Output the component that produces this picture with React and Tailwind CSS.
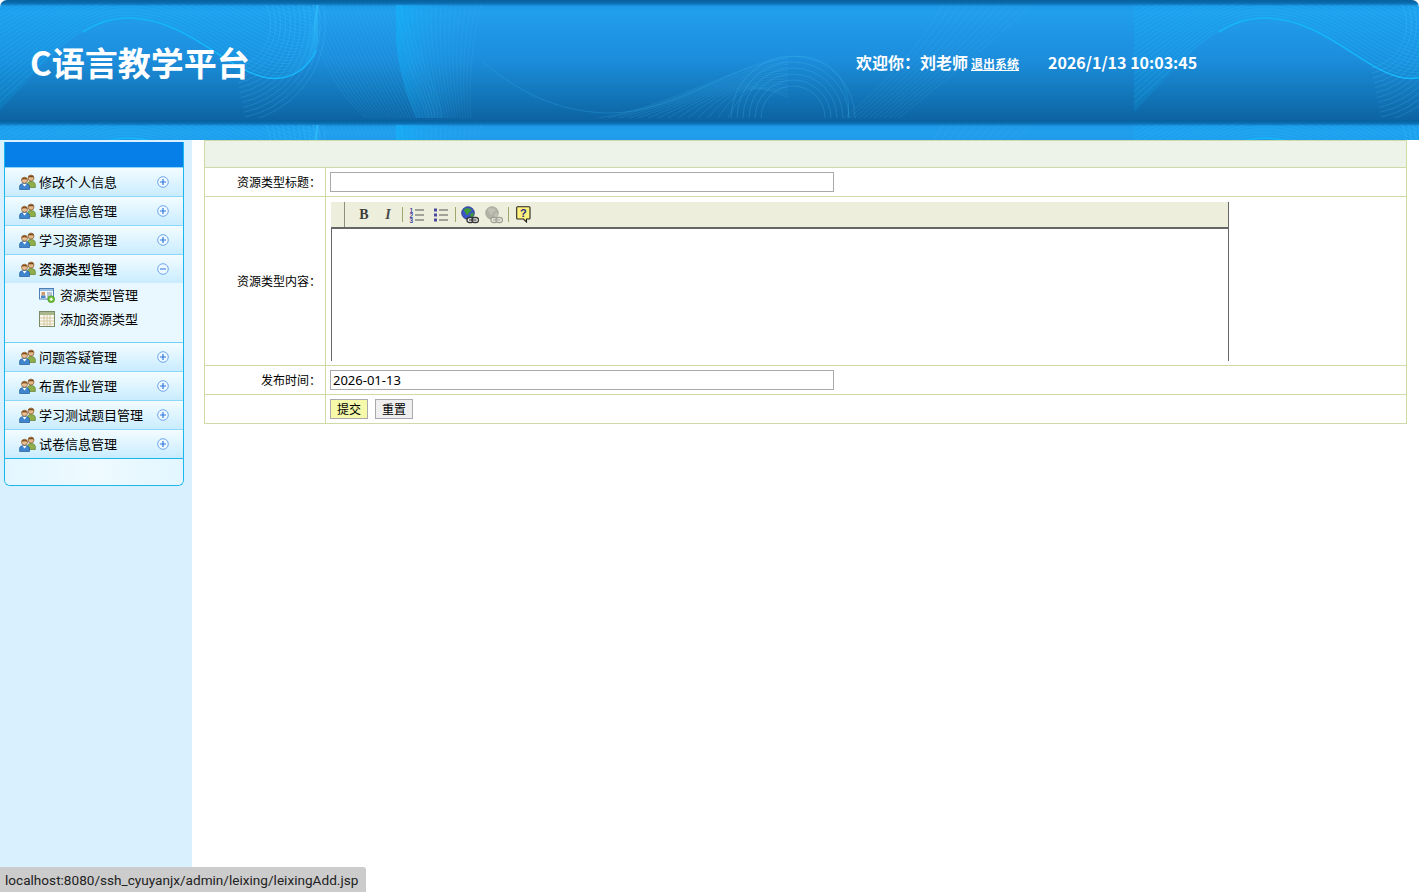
const range = (n) => Array.from({ length: n }, (_, i) => i);

function HeaderArt() {
  return (
    <svg className="absolute inset-0 w-full h-full" width="1419" height="140">
      <defs>
        <linearGradient id="hbg" x1="0" y1="0" x2="0" y2="1">
          <stop offset="0" stopColor="#07609c" />
          <stop offset="0.025" stopColor="#0a6cae" />
          <stop offset="0.055" stopColor="#1e9ae8" />
          <stop offset="0.1" stopColor="#219eee" />
          <stop offset="0.5" stopColor="#1c8ddb" />
          <stop offset="0.83" stopColor="#1173b5" />
          <stop offset="1" stopColor="#0d63a3" />
        </linearGradient>
        <linearGradient id="dshape" x1="0" y1="0" x2="1" y2="0.3">
          <stop offset="0" stopColor="#0fb4fb" stopOpacity="0.6" />
          <stop offset="0.5" stopColor="#18a8f2" stopOpacity="0.22" />
          <stop offset="1" stopColor="#18a8f2" stopOpacity="0" />
        </linearGradient>
        <clipPath id="artclip">
          <rect x="0" y="5" width="1136" height="113" />
        </clipPath>
        <pattern id="tile" x="-2" y="0" width="1136" height="120" patternUnits="userSpaceOnUse">
          <rect width="1136" height="120" fill="url(#hbg)" />
          <g fill="none" strokeWidth="1" clipPath="url(#artclip)">
            <path d="M0,5 L0,112 C50,60 80,18 130,18 C190,18 230,72 270,78 C300,82 316,60 320,40 L320,5 Z" fill="#0fb0f8" fillOpacity="0.16" stroke="none" />
            {range(26).map((i) => (
              <path key={i} stroke="#2bbcfb" strokeOpacity="0.26" d={`M${-10 - i * 4},${112 - i * 3} C${50 - i * 2},${60 - i * 3} ${80},${18 - i * 3} ${130},${18 - i * 3} C${190 + i},${18 - i * 3} ${230 + i * 2},${72 - i * 3} ${270 + i * 2},${78 - i * 3} C${300 + i},${82 - i * 3} ${316},${60 - i * 2} ${320},${40 - i * 2}`} />
            ))}
            <path stroke="#14b6fb" strokeWidth="1.6" d="M85,32 C100,22 115,18 130,18 C190,18 230,72 270,78 C295,81 312,66 318,50" />
            {range(12).map((i) => (
              <path key={i} stroke="#4ecaff" strokeOpacity="0.2" d={`M${228 + (45 + i * 5) * 0.3},${24 - (45 + i * 5) * 0.95} A${45 + i * 5},${45 + i * 5} 0 0 1 ${228 + (45 + i * 5) * 0.2},${24 + (45 + i * 5) * 0.98}`} />
            ))}
            {range(26).map((i) => (
              <path key={i} stroke="#35bcf8" strokeOpacity="0.16" d={`M${302 + i * 4},4 C${322 + i * 4},60 ${345 + i * 4},100 ${368 + i * 3},118`} />
            ))}
            <path d="M398,5 L398,40 C400,70 410,100 418,118 L455,118 C475,105 485,85 483,65 C480,40 470,20 450,5 Z" fill="url(#dshape)" stroke="none" />
            {range(18).map((i) => (
              <path key={i} stroke="#56ccff" strokeOpacity="0.1" d={`M${398 + i * 5},5 C${404 + i * 4},50 ${420 + i * 3},90 ${430 + i * 2.5},118`} />
            ))}
            <path stroke="#2bb0f0" strokeOpacity="0.28" d="M485,62 C530,100 570,112 610,113 C680,113 730,65 790,57 C830,52 855,80 850,118" />
            {range(14).map((i) => (
              <path key={i} stroke="#4cc0f5" strokeOpacity="0.16" d={`M${600 + i * 10},118 C${670 + i * 6},${108 - i * 2} ${720 + i * 3},${72 + i} ${790},${58 + i * 3}`} />
            ))}
            {range(6).map((i) => (
              <path key={i} stroke="#4cc0f5" strokeOpacity="0.22" d={`M${795 - (32 + i * 6)},118 A${32 + i * 6},${32 + i * 6} 0 0 1 ${795 + (32 + i * 6)},118`} />
            ))}
            {range(12).map((i) => (
              <path key={i} stroke="#56c4f8" strokeOpacity="0.13" d={`M${846 + i * 5},118 C${880 + i * 5},${90} ${920 + i * 6},${50} ${945 + i * 8},5`} />
            ))}
          </g>
        </pattern>
      </defs>
      <rect width="1419" height="140" fill="url(#tile)" />
    </svg>
  );
}

function UsersIcon() {
  return (
    <svg width="17" height="16" viewBox="0 0 17 16" className="shrink-0">
      <path d="M8.5 13.5 V9.5 C9 8 10.5 7.5 12 7.5 C14.5 7.5 16.3 8.5 16.3 11 V13.5 Z" fill="#8fae4a" stroke="#5e7d2a" strokeWidth="0.7" />
      <circle cx="12" cy="4" r="3" fill="#e3b98c" stroke="#8a5a2a" strokeWidth="0.7" />
      <path d="M9 3.5 C9.5 1 14.5 0.5 15 3.5 C13 3 11 3 9 3.5 Z" fill="#7a4a1c" />
      <path d="M0.6 15.5 V12.5 C0.6 10.3 3 9.6 5.5 9.6 C8 9.6 10.5 10.3 10.5 12.5 V15.5 Z" fill="#3f86cf" stroke="#1e5b9e" strokeWidth="0.7" />
      <path d="M3.6 10 L5.5 12.4 L7.6 10 Z" fill="#ffffff" />
      <circle cx="5.5" cy="6.2" r="3" fill="#e8bf94" stroke="#8a5a2a" strokeWidth="0.7" />
      <path d="M2.5 5.8 C3 3 8 2.8 8.5 5.8 C6.5 5 4.5 5 2.5 5.8 Z" fill="#86501f" />
    </svg>
  );
}

function ToggleIcon({ open }) {
  return (
    <svg width="12" height="12" viewBox="0 0 12 12" className="shrink-0">
      <circle cx="6" cy="6" r="5.3" fill="#eef8ff" stroke="#6fa6ee" />
      <path d={open ? "M3 6 H9" : "M3 6 H9 M6 3 V9"} stroke="#2f78dc" strokeWidth="1.2" />
    </svg>
  );
}

function CardIcon() {
  return (
    <svg width="16" height="16" viewBox="0 0 16 16" className="shrink-0">
      <rect x="0.5" y="1.5" width="14" height="10.5" fill="#f4f8fc" stroke="#4c7fb4" />
      <rect x="1" y="2" width="13" height="2" fill="#9cc0e4" />
      <rect x="2.5" y="5" width="3.5" height="3.5" fill="#d29a66" />
      <rect x="2" y="8.5" width="4.5" height="2.5" fill="#4c86c4" />
      <path d="M8 6 H13 M8 8 H13 M8 10 H10" stroke="#7c93aa" />
      <circle cx="12.2" cy="12.2" r="3.4" fill="#6cc035" stroke="#3f8a18" strokeWidth="0.6" />
      <path d="M10.4 12.2 H14 M12.2 10.4 V14" stroke="#ffffff" strokeWidth="1.1" />
    </svg>
  );
}

function GridIcon() {
  return (
    <svg width="16" height="16" viewBox="0 0 16 16" className="shrink-0">
      <rect x="0.5" y="0.5" width="15" height="15" fill="#fbfaf2" stroke="#7d8a66" />
      <rect x="1" y="1" width="14" height="3" fill="#a9b88c" />
      <path d="M1 7 H15 M1 10 H15 M1 13 H15 M5 4 V15 M8 4 V15 M11 4 V15" stroke="#d4c7a0" />
    </svg>
  );
}

function OlIcon() {
  return (
    <svg width="16" height="16" viewBox="0 0 16 16">
      <g fill="#48489c" fontSize="6.5" fontWeight="700" fontFamily="'Liberation Sans',sans-serif">
        <text x="0.5" y="5.5">1</text>
        <text x="0.5" y="10.5">2</text>
        <text x="0.5" y="15.5">3</text>
      </g>
      <path d="M6 3 H15 M6 8 H15 M6 13 H15" stroke="#555" />
    </svg>
  );
}

function UlIcon() {
  return (
    <svg width="16" height="16" viewBox="0 0 16 16">
      <rect x="1" y="1.5" width="3" height="3" fill="#48489c" />
      <rect x="1" y="6.5" width="3" height="3" fill="#48489c" />
      <rect x="1" y="11.5" width="3" height="3" fill="#48489c" />
      <path d="M6 3 H15 M6 8 H15 M6 13 H15" stroke="#555" />
    </svg>
  );
}

function GlobeIcon({ gray }) {
  return (
    <svg width="18" height="18" viewBox="0 0 18 18" className={gray ? "opacity-40 grayscale" : ""}>
      <circle cx="7" cy="7" r="6.3" fill="#3a55c8" stroke="#23307e" strokeWidth="0.8" />
      <path d="M3 3 C6 1.5 9 2 11 4 C10 6 8 5.5 7.5 7.5 C7 10 5 9 4.5 7 C4 5.5 2.5 5 3 3 Z" fill="#3f9a3a" />
      <path d="M9 8 L12.5 6.5 L12.5 10 L10 11.5 Z" fill="#3f9a3a" />
      <rect x="6" y="11.5" width="6.5" height="5" rx="2.5" fill="#fff" stroke="#333" strokeWidth="1.3" />
      <rect x="11" y="11.5" width="6.5" height="5" rx="2.5" fill="#fff" stroke="#333" strokeWidth="1.3" />
      <path d="M8 14 H15.5" stroke="#333" strokeWidth="1.2" />
    </svg>
  );
}

function HelpIcon() {
  return (
    <svg width="15" height="17" viewBox="0 0 15 17">
      <path d="M1.5 0.7 H13 Q14 0.7 14 1.7 V12 Q14 13 13 13 H10.5 V16 L7.5 13 H1.5 Q0.7 13 0.7 12 V1.7 Q0.7 0.7 1.5 0.7 Z" fill="#fff27a" stroke="#222" strokeWidth="1.1" />
      <text x="7.4" y="11" textAnchor="middle" fill="#2a2a86" fontSize="11" fontWeight="700" fontFamily="'Liberation Sans',sans-serif">?</text>
    </svg>
  );
}

function ToolBtn({ children }) {
  return <div className="w-6 h-full flex items-center justify-center">{children}</div>;
}

function ToolSep() {
  return <div className="w-px h-[15px] mx-[2px] bg-[#a3a56f]" />;
}

function Item({ label, open, last, plain }) {
  const border = plain ? "border-transparent" : last ? "border-[#19b7ee]" : "border-[#8cd8f8]";
  return (
    <div className={`h-[29px] flex items-center pl-[14px] pr-[14px] bg-gradient-to-b from-[#f3fcff] to-[#c9ecff] border-b ${border}`}>
      <UsersIcon />
      <span className={`ml-[3px] text-[13px] text-black flex-1 whitespace-nowrap ${open ? "font-medium" : ""}`}>{label}</span>
      <ToggleIcon open={open} />
    </div>
  );
}

function SubItem({ icon, label }) {
  return (
    <div className="h-[23px] flex items-center pl-[34px]">
      {icon}
      <span className="ml-[5px] text-[13px] text-black whitespace-nowrap">{label}</span>
    </div>
  );
}

const labelCell = "border border-[#cfdaa9] text-right pr-1 pl-0 text-[12px] text-black align-middle";
const fieldCell = "border border-[#cfdaa9] pl-1 align-middle";

export default function App() {
  return (
    <div className="h-screen flex flex-col overflow-hidden bg-white font-['Noto_Sans_CJK_SC','Noto_Sans',sans-serif]">
      <header className="relative h-[140px] shrink-0 rounded-t-[7px] overflow-hidden text-white font-bold">
        <HeaderArt />
        <div className="relative h-full flex">
          <div className="w-[856px] shrink-0 pl-[30px] pt-[38px] text-[33px] leading-[48px]">C语言教学平台</div>
          <div className="pt-[50px] flex items-baseline text-[16px] leading-6 whitespace-nowrap">
            <span>欢迎你：刘老师</span>
            <a className="ml-[3px] text-[12px] underline">退出系统</a>
            <span className="ml-[29px]">2026/1/13 10:03:45</span>
          </div>
        </div>
      </header>
      <div className="flex-1 flex min-h-0">
        <aside className="w-[192px] shrink-0 bg-[#d9f1ff] pl-1 pt-[2px]">
          <div className="w-[180px] border-x border-b border-[#19b7ee] rounded-b-[6px] overflow-hidden">
            <div className="h-[25px] -mx-px bg-[#0680e8]" />
            <div className="border-t border-[#8cd8f8]">
              <Item label="修改个人信息" />
              <Item label="课程信息管理" />
              <Item label="学习资源管理" />
              <div className="h-7 overflow-hidden"><Item label="资源类型管理" open plain /></div>
              <div className="h-[60px] flex flex-col gap-px bg-[#e9f8ff] border-b border-[#6ed0f6]">
                <SubItem icon={<CardIcon />} label="资源类型管理" />
                <SubItem icon={<GridIcon />} label="添加资源类型" />
              </div>
              <Item label="问题答疑管理" />
              <Item label="布置作业管理" />
              <Item label="学习测试题目管理" />
              <Item label="试卷信息管理" last />
            </div>
            <div className="h-[26px] bg-gradient-to-r from-[#e3f6ff] via-[#eefaff] to-[#e3f6ff]" />
          </div>
        </aside>
        <main className="flex-1 pl-3">
          <table className="w-[1203px] table-fixed border-collapse">
            <colgroup>
              <col className="w-[121px]" />
              <col />
            </colgroup>
            <tbody>
              <tr className="h-[27px]">
                <td colSpan={2} className="border border-[#cfdaa9] bg-[#eef3e9]" />
              </tr>
              <tr className="h-[29px]">
                <td className={labelCell}>资源类型标题：</td>
                <td className={fieldCell}>
                  <div className="w-[504px] h-5 border border-[#aaaaaa] bg-white" />
                </td>
              </tr>
              <tr className="h-[169px]">
                <td className={labelCell}>资源类型内容：</td>
                <td className="border border-[#cfdaa9] pl-[5px] pt-[5px] pb-1 align-top">
                  <div className="w-[898px] h-[159px] border-r border-[#666666] flex flex-col">
                    <div className="h-[25px] shrink-0 bg-[#eeeedc] flex items-center pl-[13px]">
                      <div className="w-px h-full bg-[#8f8f80]" />
                      <div className="w-[7px]" />
                      <ToolBtn><span className="font-['Liberation_Serif',serif] font-bold text-[14px] text-[#3d3d3d] leading-none">B</span></ToolBtn>
                      <ToolBtn><span className="font-['Liberation_Serif',serif] font-bold italic text-[14px] text-[#4a4a4a] leading-none">I</span></ToolBtn>
                      <ToolSep />
                      <ToolBtn><OlIcon /></ToolBtn>
                      <ToolBtn><UlIcon /></ToolBtn>
                      <ToolSep />
                      <ToolBtn><GlobeIcon /></ToolBtn>
                      <ToolBtn><GlobeIcon gray /></ToolBtn>
                      <ToolSep />
                      <ToolBtn><HelpIcon /></ToolBtn>
                    </div>
                    <div className="flex-1 border-t-2 border-l border-[#666666] bg-white" />
                  </div>
                </td>
              </tr>
              <tr className="h-[29px]">
                <td className={labelCell}>发布时间：</td>
                <td className={fieldCell}>
                  <div className="w-[504px] h-5 border border-[#aaaaaa] bg-white pl-[2px] text-[13px] leading-[18px] text-black font-['Noto_Sans',sans-serif]">2026-01-13</div>
                </td>
              </tr>
              <tr className="h-[29px]">
                <td className="border border-[#cfdaa9]" />
                <td className={fieldCell}>
                  <div className="flex gap-[7px]">
                    <button className="w-[38px] h-5 border border-[#aaaaaa] bg-[#f5f9a9] text-[12px] leading-none text-black">提交</button>
                    <button className="w-[38px] h-5 border border-[#aaaaaa] bg-[#efefef] text-[12px] leading-none text-black">重置</button>
                  </div>
                </td>
              </tr>
            </tbody>
          </table>
        </main>
      </div>
      <div className="fixed left-0 bottom-0 h-[25px] w-[366px] bg-[#cccccc] rounded-tr-[3px] pl-[5px] text-[13.6px] leading-[26px] text-[#222222] font-['Roboto',sans-serif] whitespace-nowrap">localhost:8080/ssh_cyuyanjx/admin/leixing/leixingAdd.jsp</div>
    </div>
  );
}
